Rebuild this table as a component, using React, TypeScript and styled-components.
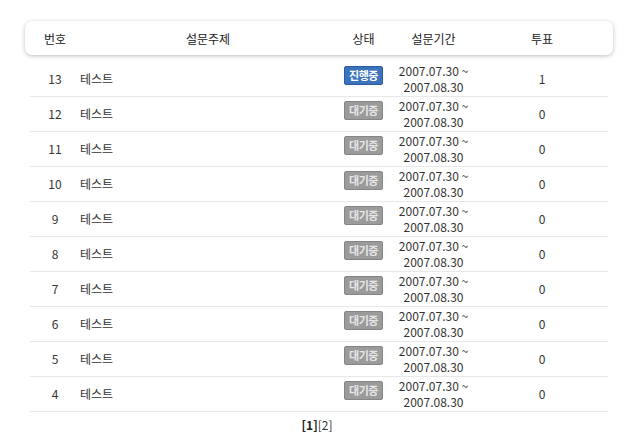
import * as React from 'react';
import styled, { createGlobalStyle } from 'styled-components';

const GlobalStyle = createGlobalStyle`
  body {
    margin: 0;
    background: #fff;
    font-family: "Noto Sans CJK KR", "Noto Sans", sans-serif;
    font-size: 12px;
    color: #333;
  }
`;

const Page = styled.div`
  padding: 21px 27px 0 25px;
`;

const columns = '50px 256px 55px 85px 1fr';

const HeaderBar = styled.div`
  display: grid;
  grid-template-columns: ${columns};
  align-items: center;
  height: 34px;
  padding: 0 5px;
  border-radius: 7px;
  background: #fff;
  box-shadow: 0 1px 4px rgba(110, 80, 90, 0.4);
`;

const HeadCell = styled.div`
  text-align: center;
  font-size: 12px;
  color: #222;
`;

const Body = styled.div`
  margin: 7px 5px 0;
`;

const Row = styled.div`
  display: grid;
  grid-template-columns: ${columns};
  align-items: center;
  height: 34px;
  border-bottom: 1px solid #e8e8e8;
`;

const Cell = styled.div<{ $align?: 'left' | 'center' }>`
  text-align: ${(p) => p.$align ?? 'center'};
  color: #333;
  line-height: 16px;
`;

const StatusCell = styled.div`
  align-self: start;
  padding-top: 4px;
  text-align: center;
  line-height: 0;
`;

const Badge = styled.span<{ $active?: boolean }>`
  display: inline-block;
  width: 37px;
  height: 17px;
  line-height: 17px;
  font-size: 11px;
  font-weight: bold;
  text-align: center;
  border-radius: 2px;
  color: ${(p) => (p.$active ? '#fff' : '#e6e6e6')};
  background: ${(p) => (p.$active ? '#3b74bc' : '#9b9b9b')};
  border: 1px solid ${(p) => (p.$active ? '#2b5d9e' : '#858585')};
  letter-spacing: -0.5px;
`;

const Pager = styled.div`
  text-align: center;
  padding-top: 6px;
  line-height: 14px;
  font-size: 12px;
  color: #333;
  padding-right: 4px;
`;

const Current = styled.b`
  font-weight: bold;
  color: #222;
`;

const rows = [13, 12, 11, 10, 9, 8, 7, 6, 5, 4];

export default function App() {
  return (
    <Page>
      <GlobalStyle />
      <HeaderBar>
        <HeadCell>번호</HeadCell>
        <HeadCell>설문주제</HeadCell>
        <HeadCell>상태</HeadCell>
        <HeadCell>설문기간</HeadCell>
        <HeadCell>투표</HeadCell>
      </HeaderBar>
      <Body>
        {rows.map((n) => (
          <Row key={n}>
            <Cell>{n}</Cell>
            <Cell $align="left">테스트</Cell>
            <StatusCell>
              <Badge $active={n === 13}>{n === 13 ? '진행중' : '대기중'}</Badge>
            </StatusCell>
            <Cell>
              2007.07.30 ~
              <br />
              2007.08.30
            </Cell>
            <Cell>{n === 13 ? 1 : 0}</Cell>
          </Row>
        ))}
      </Body>
      <Pager>
        <Current>[1]</Current>[2]
      </Pager>
    </Page>
  );
}
